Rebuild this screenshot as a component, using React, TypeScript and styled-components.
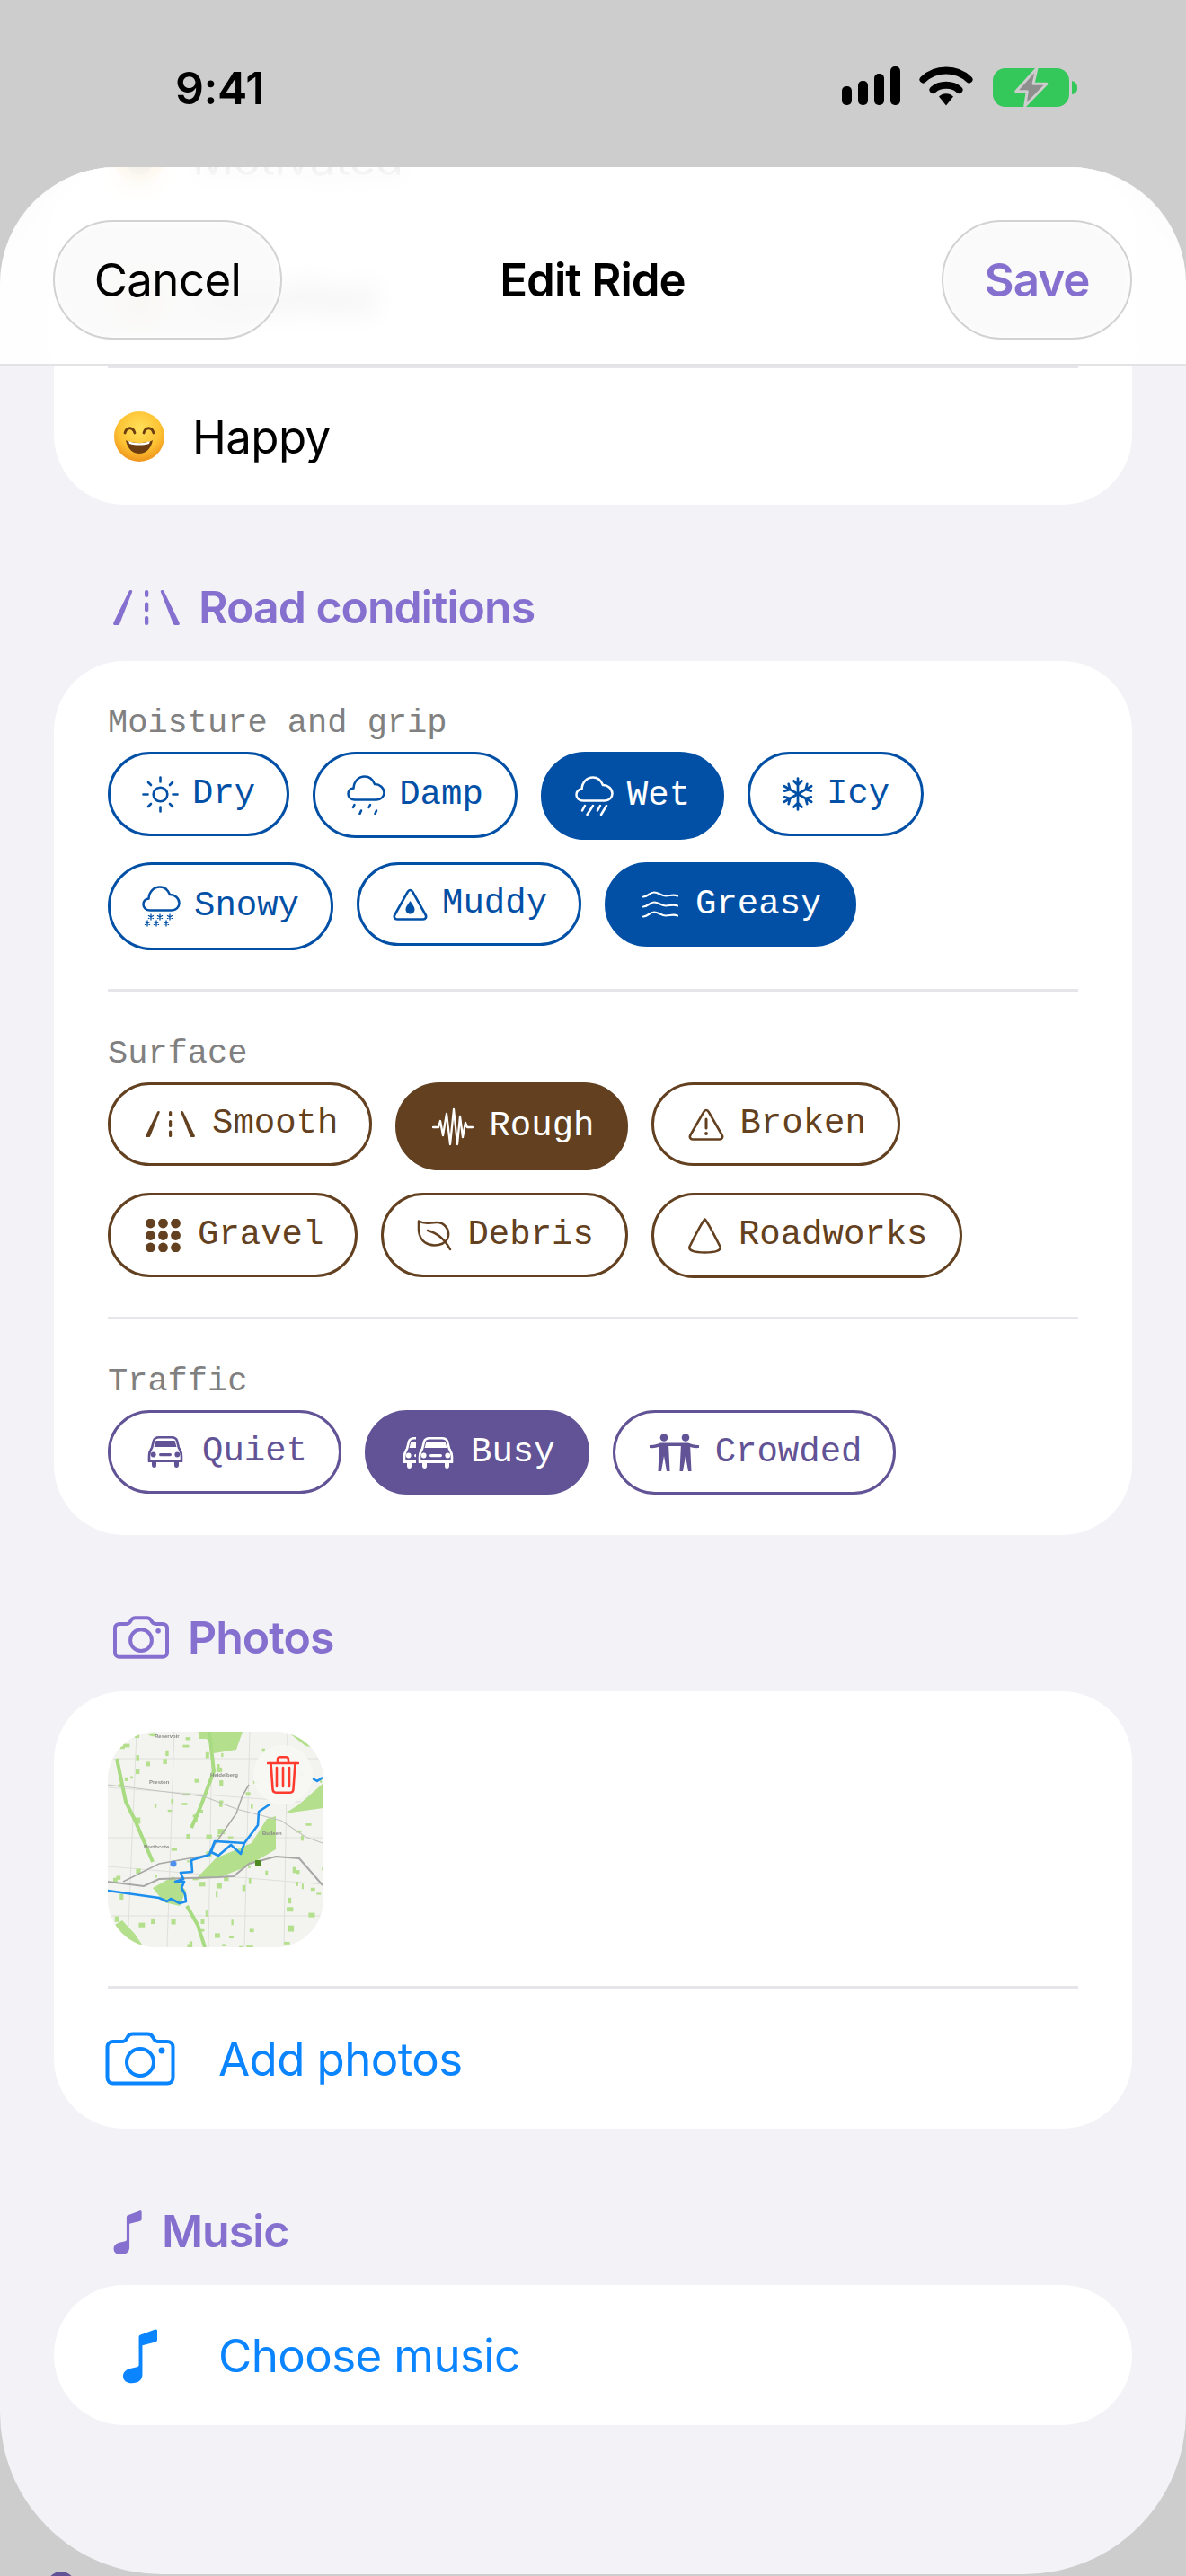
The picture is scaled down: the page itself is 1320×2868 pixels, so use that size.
import React from 'react';
import styled, { createGlobalStyle } from 'styled-components';

const GlobalStyle = createGlobalStyle`
  html, body {
    margin: 0;
    padding: 0;
    background: #cdcdcd;
  }
  * {
    box-sizing: border-box;
  }
`;

const SANS = `Inter, 'Liberation Sans', sans-serif`;
const MONO = `'Liberation Mono', 'DejaVu Sans Mono', monospace`;
const PURPLE = '#8670cf';
const LINK = '#0a84ff';
const HAIRLINE = '#e5e5ea';

const TONES: Record<string, string> = {
  blue: '#0250a6',
  brown: '#624020',
  violet: '#615395',
};

const Screen = styled.div`
  position: relative;
  width: 1320px;
  height: 2868px;
  overflow: hidden;
  background: #cdcdcd;
  font-family: ${SANS};
`;

const StatusBar = styled.div`
  display: flex;
  justify-content: space-between;
  align-items: flex-start;
  height: 186px;
  padding: 74px 121px 0 195px;
`;

const Clock = styled.div`
  font-size: 50px;
  line-height: 48px;
  font-weight: 600;
  color: #000;
  letter-spacing: -0.5px;
`;

const StatusIcons = styled.div`
  display: flex;
  align-items: flex-start;
  gap: 21px;
`;

const BehindRow = styled.div`
  position: absolute;
  left: 52px;
  top: 2863px;
  display: flex;
  align-items: flex-start;
  gap: 18px;
`;

const BehindDot = styled.div`
  width: 32px;
  height: 32px;
  border-radius: 50%;
  background: ${TONES.violet};
`;

const BehindText = styled.div`
  font-size: 42px;
  line-height: 42px;
  margin-top: 2px;
  color: ${TONES.violet};
`;

const Sheet = styled.div`
  position: relative;
  height: 2680px;
  overflow: hidden;
  background: #f2f2f7;
  border-radius: 130px 130px 180px 180px;
`;

const NavBar = styled.header`
  position: absolute;
  top: 0;
  left: 0;
  right: 0;
  z-index: 2;
  height: 221px;
  display: grid;
  grid-template-columns: 1fr auto 1fr;
  align-items: start;
  padding: 59px 60px 0 59px;
  background: rgba(255, 255, 255, 0.9);
  backdrop-filter: blur(14px);
  border-bottom: 2px solid #e3e3e6;
`;

const GlassButton = styled.button<{ $end?: boolean; $accent?: boolean }>`
  justify-self: ${p => (p.$end ? 'end' : 'start')};
  height: 133px;
  width: ${p => (p.$end ? '212px' : '255px')};
  border-radius: 67px;
  border: 2px solid #d2d2d2;
  background: rgba(248, 248, 248, 0.72);
  box-shadow: inset 0 0 6px #fff;
  font-family: ${SANS};
  font-size: 51px;
  font-weight: ${p => (p.$accent ? 600 : 400)};
  letter-spacing: ${p => (p.$accent ? '-1px' : '-0.6px')};
  color: ${p => (p.$accent ? PURPLE : '#000')};
  padding: 0;
`;

const NavTitle = styled.h1`
  margin: 0;
  height: 133px;
  line-height: 133px;
  font-size: 51px;
  font-weight: 600;
  letter-spacing: -1px;
  color: #000;
`;

const Content = styled.div`
  display: flex;
  flex-direction: column;
  margin-top: -86px;
  padding: 0 60px;
`;

const Card = styled.div<{ $round?: boolean }>`
  background: #fff;
  border-radius: 78px;
`;

const Divider = styled.div`
  height: 3px;
  margin: 0 60px;
  background: ${HAIRLINE};
`;

const MoodRow = styled.div`
  display: flex;
  align-items: center;
  gap: 30px;
  height: 152px;
  padding-left: 66px;
  font-size: 51px;
  letter-spacing: -0.6px;
  color: #000;
`;

const Section = styled.section`
  margin-top: 84px;
`;

const SectionTitle = styled.h2`
  display: flex;
  align-items: center;
  gap: 21px;
  height: 60px;
  margin: 0 0 30px 66px;
  font-size: 50px;
  font-weight: 600;
  letter-spacing: -1px;
  color: ${PURPLE};
`;

const ConditionsCard = styled(Card)`
  padding: 47px 60px 45px;
`;

const Group = styled.div`
  & + & {
    border-top: 3px solid ${HAIRLINE};
    margin-top: 43px;
    padding-top: 47px;
  }
`;

const GroupLabel = styled.div`
  font-family: ${MONO};
  font-size: 37px;
  line-height: 44px;
  color: #808080;
  margin-bottom: 10px;
`;

const ChipWrap = styled.div`
  display: flex;
  flex-wrap: wrap;
  align-items: flex-start;
  gap: 25px 26px;
`;

const Chip = styled.button<{ $tone: string; $active?: boolean; $height: number }>`
  display: inline-flex;
  align-items: center;
  gap: 15px;
  height: ${p => p.$height}px;
  padding: 0 35px;
  border-radius: 50px;
  border: 3px solid ${p => TONES[p.$tone]};
  background: ${p => (p.$active ? TONES[p.$tone] : '#fff')};
  color: ${p => (p.$active ? '#fff' : TONES[p.$tone])};
  font-family: ${MONO};
  font-size: 39px;
  line-height: 1;
`;

const ChipIcon = styled.span<{ $width: number }>`
  display: flex;
  align-items: center;
  justify-content: center;
  width: ${p => p.$width}px;
`;

const PhotosCard = styled(Card)`
  padding-top: 45px;
`;

const Thumb = styled.div`
  position: relative;
  width: 240px;
  height: 240px;
  margin: 0 0 43px 60px;
  border-radius: 54px;
  overflow: hidden;
  background: #f3f3ef;
`;

const DeleteBadge = styled.button`
  position: absolute;
  top: 15px;
  right: 12px;
  width: 66px;
  height: 66px;
  padding: 0;
  border: 0;
  border-radius: 50%;
  display: flex;
  align-items: center;
  justify-content: center;
  background: rgba(247, 248, 244, 0.96);
`;

const ActionRow = styled.div`
  display: grid;
  grid-template-columns: 78px 1fr;
  align-items: center;
  column-gap: 48px;
  height: 156px;
  padding-left: 57px;
  font-size: 51px;
  letter-spacing: -0.6px;
  color: ${LINK};
`;

const ActionIcon = styled.span`
  display: flex;
  justify-content: center;
`;

/* --- icons --- */

const Signal = () => (
  <svg width="65" height="43" viewBox="0 0 65 43" fill="#000">
    <rect x="0" y="22" width="11" height="21" rx="5" />
    <rect x="18" y="16" width="11" height="27" rx="5" />
    <rect x="36" y="8" width="11" height="35" rx="5" />
    <rect x="54" y="0" width="11" height="43" rx="5" />
  </svg>
);

const Wifi = () => (
  <svg width="60" height="44" viewBox="0 0 60 44" fill="none" stroke="#000" strokeWidth="8" strokeLinecap="round">
    <path d="M4.5 14.5C18 1 42 1 55.5 14.5" />
    <path d="M15.5 26C23 19 37 19 44.5 26" />
    <path d="M22 33.5C26 29 34 29 38 33.5L30 43.5Z" fill="#000" stroke="none" />
  </svg>
);

const Battery = () => (
  <svg width="94" height="46" viewBox="0 0 94 46" style={{ marginLeft: 1 }}>
    <rect x="0" y="2" width="85" height="43" rx="14" fill="#34c759" />
    <path d="M88 16C92 17 94 19.5 94 24C94 28 92 30.500 88 31Z" fill="#34c759" />
    <path d="M49 2L25.700 27.700H38.300L35.700 44.300L60 19.300H45Z" fill="#8e8e8e" stroke="#cdcdcd" strokeWidth="3" strokeLinejoin="round" />
  </svg>
);

const Smiley = () => (
  <svg width="58" height="58" viewBox="0 0 58 58">
    <defs>
      <radialGradient id="face" cx="50%" cy="35%" r="70%">
        <stop offset="0%" stopColor="#ffe05a" />
        <stop offset="60%" stopColor="#fdc233" />
        <stop offset="100%" stopColor="#ec8a17" />
      </radialGradient>
    </defs>
    <circle cx="29" cy="29" r="28" fill="url(#face)" />
    <g fill="none" stroke="#6b3d10" strokeWidth="2.8" strokeLinecap="round">
      <path d="M13 25C15 18 22 18 24 25" />
      <path d="M34 25C36 18 43 18 45 25" />
    </g>
    <path d="M14 33C20 37 38 37 44 33C42 44 35 48 29 48C23 48 16 44 14 33Z" fill="#6b3d10" />
    <path d="M17 34C24 37 34 37 41 34L40 37C33 39 25 39 18 37Z" fill="#fff" />
  </svg>
);

const Lanes = ({ w = 55, h = 29 }: { w?: number; h?: number }) => (
  <svg width={w} height={h} viewBox="0 0 55 29" fill="currentColor">
    <path d="M1 29C0 29 0 28 0.300 27L13 1C13.300 0.400 13.800 0 14.500 0C15.500 0 16 .6 15.700 1.500L5.500 27.500C5 28.500 4.500 29 3.500 29Z" />
    <path d="M54 29C55 29 55 28 54.700 27L42 1C41.700 .4 41.200 0 40.500 0C39.500 0 39 .6 39.300 1.500L49.500 27.500C50 28.500 50.500 29 51.500 29Z" />
    <rect x="26" y="0" width="3.200" height="6" rx="1.500" />
    <rect x="26" y="10" width="3.200" height="8" rx="1.500" />
    <rect x="26" y="21.500" width="3.200" height="7.500" rx="1.500" />
  </svg>
);

const Sun = () => (
  <svg width="41" height="41" viewBox="0 0 41 41" fill="none" stroke="currentColor" strokeWidth="2.600" strokeLinecap="round">
    <circle cx="20.500" cy="20.500" r="7.800" />
    <path d="M20.500 1.500V6.500M20.500 34.500V39.500M1.500 20.500H6.500M34.500 20.500H39.500M7 7L10 10M31 31L34 34M7 34L10 31M31 10L34 7" />
  </svg>
);

const CLOUD = 'M9 27.500C4.500 27.500 1.500 24.500 1.500 21C1.500 17.500 4 15 7.500 14.500C8 7 13 1.500 20 1.500C25.500 1.500 29 5 31 10C36.500 10 41.500 14 41.500 19.500C41.500 24 38 27.500 33 27.500Z';

const CloudDrizzle = () => (
  <svg width="43" height="44" viewBox="0 0 43 44" fill="none" stroke="currentColor" strokeWidth="2.500" strokeLinecap="round">
    <path d={CLOUD} />
    <path d="M8.500 33L7 36M16 39.500L14.500 43M26 33L24.500 36M33 39.500L31.500 43" />
  </svg>
);

const CloudRain = () => (
  <svg width="43" height="44" viewBox="0 0 43 44" fill="none" stroke="currentColor" strokeWidth="2.500" strokeLinecap="round">
    <path d={CLOUD} />
    <path d="M11 33L8 38.500M20 33L13.500 43M28 33L25 38.500M35 33L29 43" />
  </svg>
);

const Star = ({ x, y }: { x: number; y: number }) => (
  <path d={`M${x} ${y - 3}V${y + 3}M${x - 2.6} ${y - 1.500}L${x + 2.6} ${y + 1.500}M${x - 2.6} ${y + 1.500}L${x + 2.6} ${y - 1.500}`} />
);

const CloudSnow = () => (
  <svg width="43" height="46" viewBox="0 0 43 46" fill="none" stroke="currentColor" strokeWidth="2.500" strokeLinecap="round">
    <path d={CLOUD} />
    <g strokeWidth="1.300">
      <Star x={10} y={35} />
      <Star x={20} y={35} />
      <Star x={31} y={35} />
      <Star x={6} y={42} />
      <Star x={16} y={42} />
      <Star x={27} y={42} />
    </g>
  </svg>
);

const Snowflake = () => (
  <svg width="34" height="38" viewBox="0 0 34 38" fill="none" stroke="currentColor" strokeWidth="2.700" strokeLinecap="round" strokeLinejoin="round">
    {[0, 60, 120].map(a => (
      <g key={a} transform={`rotate(${a} 17 19)`}>
        <path d="M17 1.500V36.500M12.500 4.500L17 9L21.500 4.500M12.500 33.500L17 29L21.500 33.500" />
      </g>
    ))}
  </svg>
);

const MudTriangle = () => (
  <svg width="39" height="36" viewBox="0 0 39 36" fill="none" stroke="currentColor" strokeWidth="2.600" strokeLinejoin="round">
    <path d="M19.500 2C18.300 2 17.400 2.800 16.800 3.900L2.400 29.500C1 32 2.300 34.500 5 34.500H34C36.700 34.500 38 32 36.600 29.500L22.200 3.900C21.600 2.800 20.700 2 19.500 2Z" />
    <path d="M19.500 14C22 18 24.500 20.500 24.500 23.500C24.500 26.500 22.300 28.500 19.500 28.500C16.700 28.500 14.500 26.500 14.500 23.500C14.500 20.500 17 18 19.500 14Z" fill="currentColor" stroke="none" />
  </svg>
);

const Waves = () => (
  <svg width="40" height="30" viewBox="0 0 40 30" fill="none" stroke="currentColor" strokeWidth="2.200" strokeLinecap="round">
    {[3.500, 14.500, 25.500].map(y => (
      <path key={y} d={`M1 ${y + 3}C6 ${y + 3} 8 ${y - 2} 13 ${y - 2}C18 ${y - 2} 21 ${y + 2} 26 ${y + 2}C31 ${y + 2} 34 ${y} 39 ${y + 2}`} />
    ))}
  </svg>
);

const Waveform = () => (
  <svg width="46" height="43" viewBox="0 0 46 43" fill="none" stroke="currentColor" strokeWidth="2.300" strokeLinecap="round" strokeLinejoin="round">
    <path d="M1 22H7L9 15L12 31L16 7L20 41L24 2L28 41L31 10L34 33L37 17L39 22H45" />
  </svg>
);

const Warning = () => (
  <svg width="40" height="36" viewBox="0 0 40 36" fill="none" stroke="currentColor" strokeWidth="2.600" strokeLinejoin="round">
    <path d="M20 2C18.800 2 17.900 2.800 17.300 3.900L2.500 29.500C1 32 2.300 34.500 5 34.500H35C37.700 34.500 39 32 37.500 29.500L22.700 3.900C22.100 2.800 21.200 2 20 2Z" />
    <path d="M20 12V22" strokeWidth="3" strokeLinecap="round" />
    <circle cx="20" cy="28" r="1.900" fill="currentColor" stroke="none" />
  </svg>
);

const GravelDots = () => (
  <svg width="39" height="37" viewBox="0 0 39 37" fill="currentColor">
    {[5.500, 19.500, 33.500].flatMap(x =>
      [5, 18.500, 32].map(y => <circle key={`${x}-${y}`} cx={x} cy={y} r="5.400" />)
    )}
  </svg>
);

const Leaf = () => (
  <svg width="40" height="35" viewBox="0 0 40 35" fill="none" stroke="currentColor" strokeWidth="2.500" strokeLinecap="round" strokeLinejoin="round">
    <path d="M2 1.500C9 5.500 14 3 22 3C31 3 36 11 35 18C34 24 29 27 24 28C12 30 3 24 2 12Z" />
    <path d="M12 12C20 14 30 20 37 33" />
  </svg>
);

const Cone = () => (
  <svg width="39" height="40" viewBox="0 0 39 40" fill="none" stroke="currentColor" strokeWidth="2.500" strokeLinejoin="round">
    <path d="M19.500 1.500C16 5 5 27 2.500 32C1 36.500 8 38.500 19.500 38.500C31 38.500 38 36.500 36.500 32C34 27 23 5 19.500 1.500Z" />
  </svg>
);

const CarShape = ({ knock }: { knock: string }) => (
  <>
    <path d="M4 22C4 17 6 15 7 13L9 5C10 2 12 1.300 15 1.300H29C32 1.300 34 2 35 5L37 13C38 15 40 17 40 22V27.500H4Z" fill="none" stroke="currentColor" strokeWidth="2.600" />
    <path d="M11.500 5H32.500L34.500 12H9.500Z" fill="currentColor" />
    <path d="M3 26H41V29H37V32C37 34 36 35 34.500 35C32.500 35 32 34 32 32V29H12V32C12 34 11.500 35 9.500 35C8 35 7 34 7 32V29H3Z" fill="currentColor" />
    <circle cx="8.700" cy="20.500" r="2.900" fill="currentColor" />
    <circle cx="35.300" cy="20.500" r="2.900" fill="currentColor" />
    <rect x="15" y="19" width="14" height="3.200" rx="1.600" fill="currentColor" />
    <g data-knock={knock} />
  </>
);

const Car = () => (
  <svg width="44" height="35" viewBox="0 0 44 35">
    <CarShape knock="single" />
  </svg>
);

const Cars = () => (
  <svg width="61" height="35" viewBox="0 0 61 35">
    <defs>
      <clipPath id="rear">
        <rect x="0" y="0" width="17" height="35" />
      </clipPath>
    </defs>
    <g clipPath="url(#rear)">
      <CarShape knock="rear" />
    </g>
    <g transform="translate(17 0)">
      <CarShape knock="front" />
    </g>
  </svg>
);

const Figures = () => (
  <svg width="55" height="42" viewBox="0 0 55 42" fill="currentColor">
    {[0, 24].map(x => (
      <g key={x} transform={`translate(${x} 0)`}>
        <circle cx="16" cy="4.500" r="4.300" />
        <path d="M11 11H21L22.500 42H19L16 25L13 42H9.500Z" />
      </g>
    ))}
    <path d="M0 13C4 13.500 8 12 12 10.500H43C47 12 51 13.500 55 13V16C50 16.500 46 15.500 42 14H13C9 15.500 5 16.500 0 16Z" />
  </svg>
);

const CAMERA =
  'M9 11H19C21 11 22.500 10 23.500 8.500L25 6C26 4 28 2.500 31 2.500H47C50 2.500 52 4 53 6L54.500 8.500C55.500 10 57 11 59 11H69C73 11 75.500 13.500 75.500 17V51C75.500 55 73 57.500 69 57.500H9C5 57.500 2.500 55 2.500 51V17C2.500 13.500 5 11 9 11Z';

const Camera = ({ w, h, stroke }: { w: number; h: number; stroke: number }) => (
  <svg width={w} height={h} viewBox="0 0 78 60" fill="none" stroke="currentColor" strokeWidth={stroke}>
    <path d={CAMERA} />
    <circle cx="39" cy="34" r="15" />
    <circle cx="63" cy="21" r="3.500" fill="currentColor" stroke="none" />
  </svg>
);

const MusicNote = ({ w, h }: { w: number; h: number }) => (
  <svg width={w} height={h} viewBox="0 0 40 64" fill="currentColor">
    <path d="M20 9L36 3C38 2.500 39 3 39 5V14C39 16 38 17 36 17.500L22 21V54C22 60 18 64 10 64C4 64 0 61 0 56C0 52 3 49 8 47.500L16 45.500C17.500 45 18 44.500 18 43V13C18 11 18 9.500 20 9Z" />
  </svg>
);

const Trash = () => (
  <svg width="36" height="42" viewBox="0 0 36 42" fill="none" stroke="#ff3b30" strokeWidth="2.600" strokeLinecap="round" strokeLinejoin="round">
    <path d="M1 8H35M12 8V4C12 2 13 1.300 15 1.300H21C23 1.300 24 2 24 4V8" />
    <path d="M4.500 8L6.500 37C6.700 39.500 8 40.700 10 40.700H26C28 40.700 29.300 39.500 29.500 37L31.500 8" />
    <path d="M11 13V34M18 13V34M25 13V34" />
  </svg>
);

/* the photo is a picture of a route on a map, so it is a drawing */

const seeded = (seed: number) => {
  let s = seed;
  return () => {
    s = (s * 16807) % 2147483647;
    return s / 2147483647;
  };
};

const mapRandom = seeded(4127);
const PARK_SPECKS = Array.from({ length: 110 }, () => ({
  x: mapRandom() * 240,
  y: mapRandom() * 240,
  w: 2 + mapRandom() * 6,
  h: 2 + mapRandom() * 5,
}));

const MapPicture = () => (
  <svg width="240" height="240" viewBox="0 0 240 240">
    <defs>
      <filter id="soft">
        <feGaussianBlur stdDeviation="0.500" />
      </filter>
    </defs>
    <rect width="240" height="240" fill="#f3f3ef" />
    <g filter="url(#soft)">
      <g stroke="#dfdfdc" strokeWidth="1">
        <path d="M0 30H240M0 62L240 80M0 118H240M0 150L240 170M0 205H240" />
        <path d="M32 0L22 240M74 0L66 240M116 0L112 240M158 0L152 240M200 0L196 240" />
      </g>
      <g fill="#b4e08e">
        {PARK_SPECKS.map((p, i) => (
          <rect key={i} x={p.x} y={p.y} width={p.w} height={p.h} />
        ))}
        <path d="M97 165L120 141L160 124L177 97L187 94L187 131L153 151L127 161Z" />
        <path d="M50 174L73 161L87 177L80 194L63 190Z" />
        <path d="M213 81L240 57V85L197 91Z" />
        <path d="M100 0H150L143 20L118 24L112 10Z" />
        <path d="M0 220L16 210L30 225L40 240H0Z" />
        <path d="M200 0H240V20L220 16Z" />
      </g>
      <g fill="none" stroke="#a9dc82" strokeWidth="4">
        <path d="M10 30L20 78L30 98L50 145" />
        <path d="M113 0L118 44L103 84L93 107" />
        <path d="M88 194L100 215L108 240" />
      </g>
      <g fill="none" stroke="#a7a7a5">
        <path strokeWidth="2" d="M0 167L40 172L57 164L123 162L140 161L157 147L187 139L213 141L227 157L239 171" />
        <path strokeWidth="1.500" d="M17 167L57 147L113 137" />
        <path strokeWidth="1.500" d="M113 134L143 91L150 71L157 59" />
        <path strokeWidth="1.200" stroke="#c3c3c0" d="M0 59L107 72L143 86L193 99L220 117L239 124" />
      </g>
      <g fill="#8a8a88" fontFamily="'Liberation Sans', sans-serif" fontSize="6" fontWeight="700">
        <text x="52" y="7">Reservoir</text>
        <text x="46" y="58">Preston</text>
        <text x="114" y="50">Heidelberg</text>
        <text x="40" y="130">Northcote</text>
        <text x="172" y="115">Bulleen</text>
      </g>
      <path d="M0 177L57 185L66 189L70 186L80 191L87 189L86 181L82 174L85 167L75 167L84 164L81 157L94 156L93 143L113 137L119 122L152 124L148 136L137 126L123 138L115 134L119 122M152 124L167 104L168 89L180 81M228 52L233 55L239 51" fill="none" stroke="#1b8fee" strokeWidth="2.600" strokeLinejoin="round" />
      <circle cx="73" cy="147" r="3.500" fill="#4f8ff0" />
      <rect x="164" y="143" width="7" height="6" fill="#4d8a20" />
    </g>
  </svg>
);

/* --- data --- */

type ChipData = {
  label: string;
  icon: React.ReactNode;
  box: number;
  height: number;
  active?: boolean;
};

const GROUPS: { label: string; tone: string; chips: ChipData[] }[] = [
  {
    label: 'Moisture and grip',
    tone: 'blue',
    chips: [
      { label: 'Dry', icon: <Sun />, box: 41, height: 94 },
      { label: 'Damp', icon: <CloudDrizzle />, box: 43, height: 96 },
      { label: 'Wet', icon: <CloudRain />, box: 43, height: 98, active: true },
      { label: 'Icy', icon: <Snowflake />, box: 35, height: 94 },
      { label: 'Snowy', icon: <CloudSnow />, box: 43, height: 98 },
      { label: 'Muddy', icon: <MudTriangle />, box: 42, height: 93 },
      { label: 'Greasy', icon: <Waves />, box: 48, height: 94, active: true },
    ],
  },
  {
    label: 'Surface',
    tone: 'brown',
    chips: [
      { label: 'Smooth', icon: <Lanes />, box: 63, height: 93 },
      { label: 'Rough', icon: <Waveform />, box: 51, height: 98, active: true },
      { label: 'Broken', icon: <Warning />, box: 45, height: 93 },
      { label: 'Gravel', icon: <GravelDots />, box: 47, height: 94 },
      { label: 'Debris', icon: <Leaf />, box: 43, height: 94 },
      { label: 'Roadworks', icon: <Cone />, box: 44, height: 95 },
    ],
  },
  {
    label: 'Traffic',
    tone: 'violet',
    chips: [
      { label: 'Quiet', icon: <Car />, box: 52, height: 93 },
      { label: 'Busy', icon: <Cars />, box: 65, height: 94, active: true },
      { label: 'Crowded', icon: <Figures />, box: 61, height: 94 },
    ],
  },
];

const MOODS = ['Motivated', 'Satisfied', 'Happy'];

export default function App() {
  return (
    <Screen>
      <GlobalStyle />
      <BehindRow>
        <BehindDot />
        <BehindText>Location</BehindText>
      </BehindRow>
      <StatusBar>
        <Clock>9:41</Clock>
        <StatusIcons>
          <Signal />
          <Wifi />
          <Battery />
        </StatusIcons>
      </StatusBar>

      <Sheet>
        <NavBar>
          <GlassButton>Cancel</GlassButton>
          <NavTitle>Edit Ride</NavTitle>
          <GlassButton $end $accent>Save</GlassButton>
        </NavBar>

        <Content>
          <Card>
            {MOODS.map((mood, i) => (
              <React.Fragment key={mood}>
                {i > 0 && <Divider />}
                <MoodRow>
                  <Smiley />
                  {mood}
                </MoodRow>
              </React.Fragment>
            ))}
          </Card>

          <Section>
            <SectionTitle>
              <Lanes w={74} h={39} />
              Road conditions
            </SectionTitle>
            <ConditionsCard>
              {GROUPS.map(group => (
                <Group key={group.label}>
                  <GroupLabel>{group.label}</GroupLabel>
                  <ChipWrap>
                    {group.chips.map(chip => (
                      <Chip key={chip.label} $tone={group.tone} $active={chip.active} $height={chip.height}>
                        <ChipIcon $width={chip.box}>{chip.icon}</ChipIcon>
                        {chip.label}
                      </Chip>
                    ))}
                  </ChipWrap>
                </Group>
              ))}
            </ConditionsCard>
          </Section>

          <Section>
            <SectionTitle>
              <Camera w={62} h={48} stroke={5} />
              Photos
            </SectionTitle>
            <PhotosCard>
              <Thumb>
                <MapPicture />
                <DeleteBadge>
                  <Trash />
                </DeleteBadge>
              </Thumb>
              <Divider />
              <ActionRow>
                <ActionIcon>
                  <Camera w={78} h={60} stroke={4} />
                </ActionIcon>
                Add photos
              </ActionRow>
            </PhotosCard>
          </Section>

          <Section>
            <SectionTitle>
              <MusicNote w={33} h={51} />
              Music
            </SectionTitle>
            <Card>
              <ActionRow>
                <ActionIcon>
                  <MusicNote w={39} h={64} />
                </ActionIcon>
                Choose music
              </ActionRow>
            </Card>
          </Section>
        </Content>
      </Sheet>
    </Screen>
  );
}
